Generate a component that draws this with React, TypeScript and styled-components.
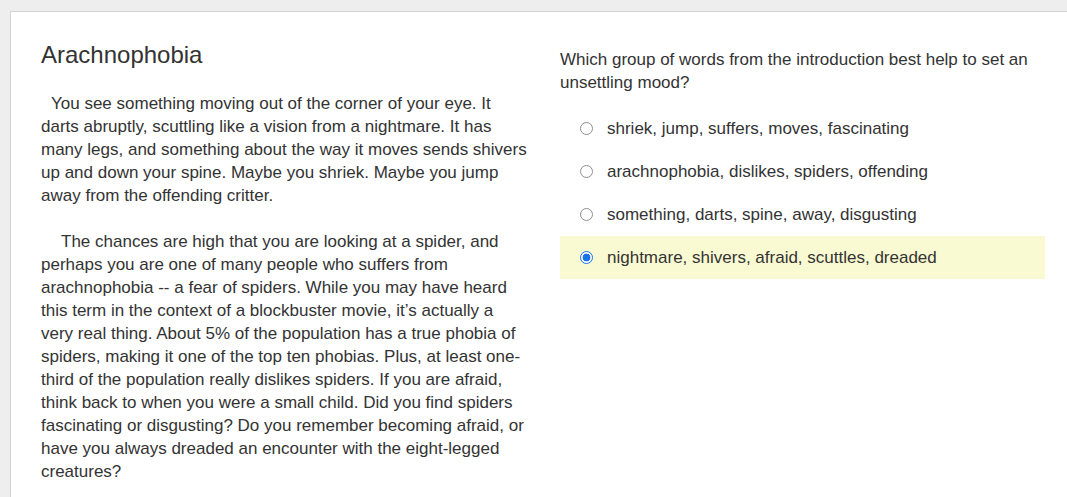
import React from "react";
import styled, { createGlobalStyle } from "styled-components";

const Global = createGlobalStyle`
  html, body {
    margin: 0;
    padding: 0;
    background: #eeeeee;
    overflow: hidden;
  }
  body {
    font-family: "Liberation Sans", Arial, sans-serif;
    color: #333333;
  }
`;

const Page = styled.div`
  padding: 11px 0 0 10px;
`;

const Card = styled.div`
  width: calc(100% + 40px);
  background: #ffffff;
  border: 1px solid #d3d3d3;
  padding: 30px;
  min-height: 600px;
  box-sizing: border-box;
`;

const Columns = styled.div`
  display: grid;
  grid-template-columns: 488px 485px;
  column-gap: 31px;
  align-items: start;
`;

const Passage = styled.div``;

const Title = styled.h1`
  margin: 0 0 24px;
  font-size: 24px;
  line-height: 26px;
  font-weight: normal;
  color: #333333;
`;

const Para = styled.p<{ $indent: number }>`
  margin: 0 0 23px;
  font-size: 17px;
  line-height: 23px;
  text-indent: ${(p) => p.$indent}px;
`;

const QuestionCol = styled.div`
  padding-top: 6px;
`;

const Question = styled.p`
  margin: 0 0 13px;
  font-size: 17px;
  line-height: 23px;
`;

const Options = styled.div`
  display: flex;
  flex-direction: column;
`;

const Option = styled.label<{ $selected: boolean }>`
  display: flex;
  align-items: center;
  height: 43px;
  padding-left: 20px;
  font-size: 17px;
  line-height: 23px;
  background: ${(p) => (p.$selected ? "#fafad2" : "transparent")};
  cursor: pointer;
`;

const Radio = styled.span<{ $checked: boolean }>`
  flex: none;
  box-sizing: border-box;
  width: 13px;
  height: 13px;
  border-radius: 50%;
  margin-right: 14px;
  border: 1px solid ${(p) => (p.$checked ? "#1a73e8" : "#8f8f8f")};
  background: ${(p) =>
    p.$checked
      ? "radial-gradient(circle, #1a73e8 0 3.6px, #ffffff 4.2px)"
      : "#ffffff"};
`;

const options = [
  "shriek, jump, suffers, moves, fascinating",
  "arachnophobia, dislikes, spiders, offending",
  "something, darts, spine, away, disgusting",
  "nightmare, shivers, afraid, scuttles, dreaded",
];

export default function App() {
  const selected = 3;
  return (
    <>
      <Global />
      <Page>
        <Card>
          <Columns>
            <Passage>
              <Title>Arachnophobia</Title>
              <Para $indent={10}>
                You see something moving out of the corner of your eye. It
                darts abruptly, scuttling like a vision from a nightmare. It has
                many legs, and something about the way it moves sends shivers
                up and down your spine. Maybe you shriek. Maybe you jump away
                from the offending critter.
              </Para>
              <Para $indent={20}>
                The chances are high that you are looking at a spider, and
                perhaps you are one of many people who suffers from
                arachnophobia -- a fear of spiders. While you may have heard
                this term in the context of a blockbuster movie, it’s actually a
                very real thing. About 5% of the population has a true phobia of
                spiders, making it one of the top ten phobias. Plus, at least
                one-third of the population really dislikes spiders. If you are
                afraid, think back to when you were a small child. Did you find
                spiders fascinating or disgusting? Do you remember becoming
                afraid, or have you always dreaded an encounter with the
                eight-legged creatures?
              </Para>
            </Passage>
            <QuestionCol>
              <Question>
                Which group of words from the introduction best help to set an
                unsettling mood?
              </Question>
              <Options>
                {options.map((o, i) => (
                  <Option key={o} $selected={i === selected}>
                    <Radio $checked={i === selected} />
                    {o}
                  </Option>
                ))}
              </Options>
            </QuestionCol>
          </Columns>
        </Card>
      </Page>
    </>
  );
}
